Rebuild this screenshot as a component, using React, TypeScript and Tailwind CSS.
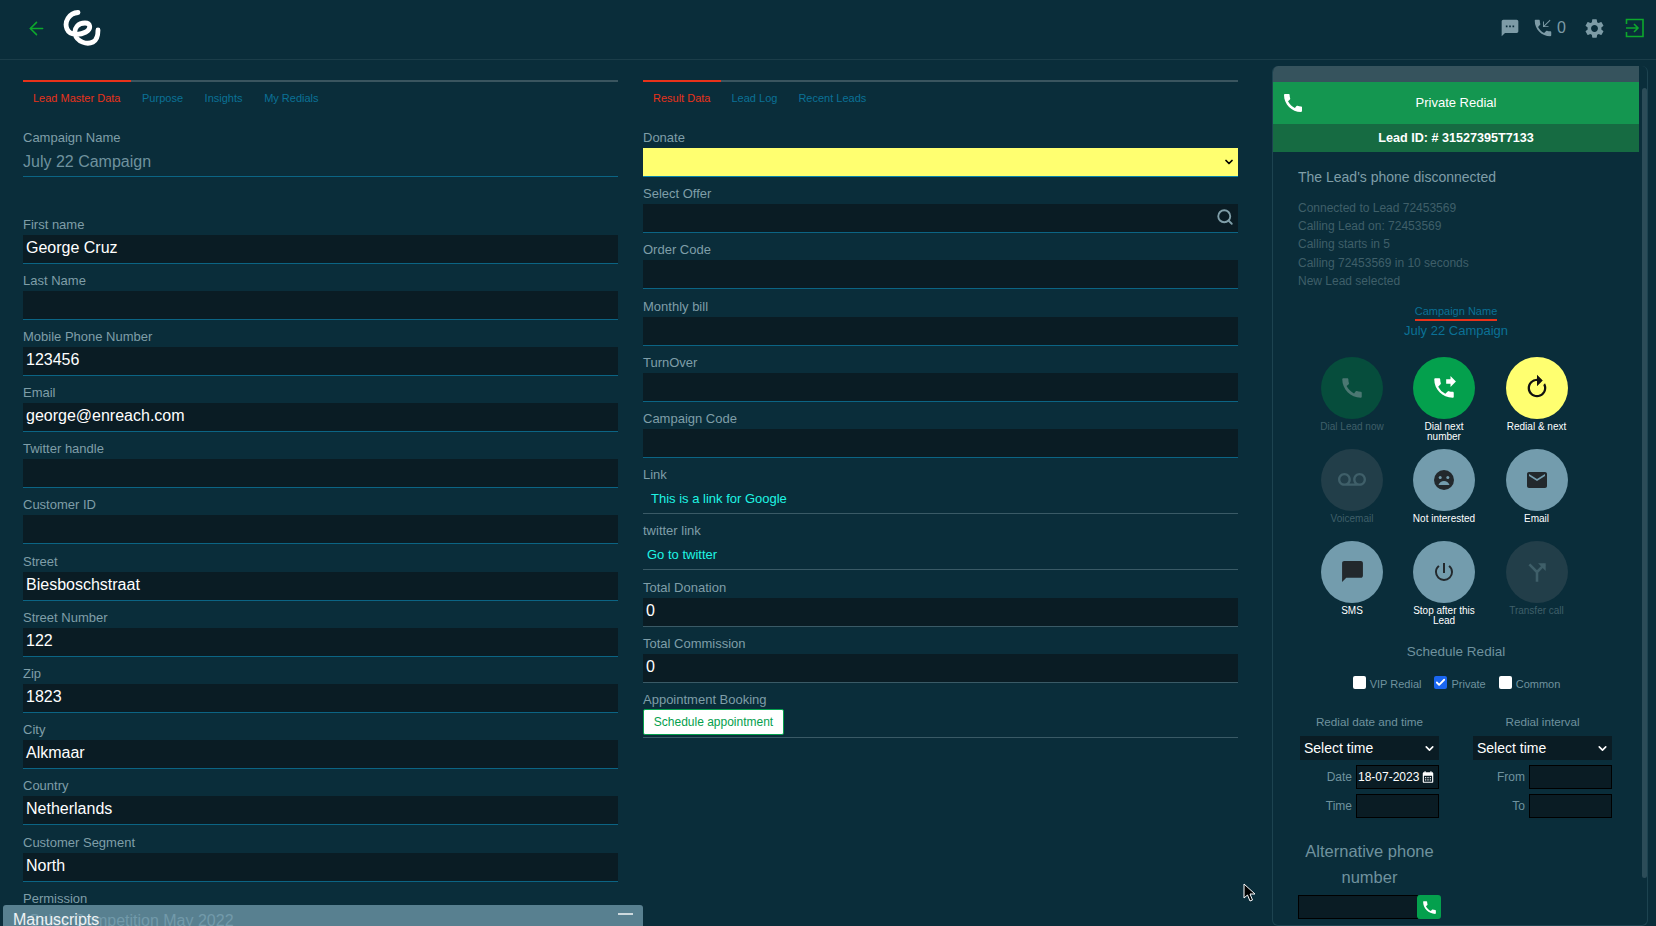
import React from 'react';
import { ArrowLeft, Check, ChevronDown, Search } from 'lucide-react';
import {
  MdCall,
  MdCalendarMonth,
  MdChatBubble,
  MdEmail,
  MdPhoneCallback,
  MdPhoneForwarded,
  MdPowerSettingsNew,
  MdRefresh,
  MdSettings,
  MdSms,
  MdVoicemail,
} from 'react-icons/md';

const leftFields = [
  { label: 'First name', value: 'George Cruz' },
  { label: 'Last Name', value: '' },
  { label: 'Mobile Phone Number', value: '123456' },
  { label: 'Email', value: 'george@enreach.com' },
  { label: 'Twitter handle', value: '' },
  { label: 'Customer ID', value: '' },
  { label: 'Street', value: 'Biesboschstraat' },
  { label: 'Street Number', value: '122' },
  { label: 'Zip', value: '1823' },
  { label: 'City', value: 'Alkmaar' },
  { label: 'Country', value: 'Netherlands' },
  { label: 'Customer Segment', value: 'North' },
];

const Field = ({ label, value = '', children, line = 'border-[#0b6484]' }: { label: string; value?: string; children?: React.ReactNode; line?: string }) => (
  <div className="mb-[7.2px]">
    <div className="h-5 text-[13px] leading-5 text-[#7f9ea8]">{label}</div>
    <div className={`relative flex h-[29px] items-center border-b bg-[#0a1c24] px-[3px] pb-[2px] text-base text-white ${line}`}>
      {value}
      {children}
    </div>
  </div>
);

const Tabs = ({ items, activeWidth, gap }: { items: string[]; activeWidth: string; gap: string }) => (
  <div className="relative h-[2px] bg-[#3a555f]">
    <div className={`h-[2px] bg-[#e8321a] ${activeWidth}`} />
    <div className={`flex pl-[10px] pt-[9px] text-[11px] leading-[14px] ${gap}`}>
      {items.map((item, idx) => (
        <span key={item} className={idx === 0 ? 'text-[#e8321a]' : 'text-[#0b7196]'}>
          {item}
        </span>
      ))}
    </div>
  </div>
);

const Logo = () => (
  <svg width="38" height="38" viewBox="0 0 38 38" fill="none" stroke="white" strokeWidth="4.8" strokeLinecap="round">
    <path d="M15 2.5C6 3 1 12 4 19c3 7 13 6 19 3 6-4 4-9-1-9-7 0-11 5-10 11 2 8 12 11 18 8 4-2 5-7 5-12" />
  </svg>
);

const TransferIcon = () => (
  <svg width="26" height="26" viewBox="0 0 24 24" fill="none" stroke="currentColor" strokeWidth="2.4">
    <path d="M5 5l7 7v9M12 12l7-7" />
    <path d="M13 4h7v7z" fill="currentColor" stroke="none" />
  </svg>
);

const ExitIcon = () => (
  <svg width="20" height="20" viewBox="0 0 20 20" fill="none" stroke="#0da82c" strokeWidth="1.6">
    <path d="M1.5 6V1.5h16.5v17H1.5V14" />
    <path d="M1 10h12M9 6l4 4-4 4" />
  </svg>
);

const SadFace = () => (
  <svg width="24" height="24" viewBox="0 0 24 24">
    <circle cx="12" cy="12" r="10" fill="currentColor" />
    <circle cx="8.2" cy="9.5" r="1.5" fill="#739cad" />
    <circle cx="15.8" cy="9.5" r="1.5" fill="#739cad" />
    <path d="M6.5 17c1-2.6 3-4 5.500-4s4.500 1.400 5.500 4z" fill="#739cad" />
  </svg>
);

const actions = [
  { label: 'Dial Lead now', circle: 'bg-[#064d3c] text-[#4b7772]', text: 'text-[#3f5f69]', icon: <MdCall size={26} /> },
  { label: 'Dial next number', circle: 'bg-[#04a04d] text-white', text: 'text-white', icon: <MdPhoneForwarded size={26} /> },
  { label: 'Redial & next', circle: 'bg-[#ffff70] text-[#111]', text: 'text-white', icon: <MdRefresh size={28} className="rotate-[-45deg]" /> },
  { label: 'Voicemail', circle: 'bg-[#223e49] text-[#3f5f69]', text: 'text-[#3f5f69]', icon: <MdVoicemail size={28} /> },
  { label: 'Not interested', circle: 'bg-[#739cad] text-[#22282c]', text: 'text-white', icon: <SadFace /> },
  { label: 'Email', circle: 'bg-[#739cad] text-[#22282c]', text: 'text-white', icon: <MdEmail size={24} /> },
  { label: 'SMS', circle: 'bg-[#739cad] text-[#22282c]', text: 'text-white', icon: <MdChatBubble size={25} /> },
  { label: 'Stop after this Lead', circle: 'bg-[#739cad] text-[#22282c]', text: 'text-white', icon: <MdPowerSettingsNew size={24} /> },
  { label: 'Transfer call', circle: 'bg-[#223e49] text-[#3f5f69]', text: 'text-[#3f5f69]', icon: <TransferIcon /> },
];

const Tick = ({ label, checked = false }: { label: string; checked?: boolean }) => (
  <span className="flex items-start gap-[4px]">
    <span className={`mt-[-1px] flex h-[13px] w-[13px] items-center justify-center rounded-[2px] ${checked ? 'bg-[#1a66f0]' : 'bg-white'}`}>
      {checked && <Check size={11} strokeWidth={4} className="text-white" />}
    </span>
    <span className="mt-[1px] leading-[13px]">{label}</span>
  </span>
);

const TimeSelect = () => (
  <div className="flex h-6 items-center justify-between bg-[#0a1c24] pl-[4px] pr-[3px] text-sm text-white">
    Select time
    <ChevronDown size={13} strokeWidth={3} />
  </div>
);

const SmallRow = ({ label, children }: { label: string; children?: React.ReactNode }) => (
  <div className="flex h-6 items-center justify-end gap-[4px] text-xs text-[#6f929e]">
    {label}
    <div className="flex h-6 w-[83px] items-center justify-between border border-black bg-[#0a1c24] pl-[1px] pr-[3px] text-xs text-white">
      {children}
    </div>
  </div>
);

const App = () => {
  return (
    <div className="relative h-screen w-full overflow-hidden bg-[#0a2d3a] font-['Liberation_Sans',Arial,sans-serif]">
      {/* top bar */}
      <header className="flex h-[60px] items-center border-b border-[#1b3d49] pb-[3px] pl-[26px] pr-[11px]">
        <ArrowLeft size={21} className="text-[#0da82c]" strokeWidth={1.8} />
        <div className="ml-[16px] mt-[2px]">
          <Logo />
        </div>
        <div className="ml-auto flex items-center text-[#7d9ba6]">
          <MdSms size={20} />
          <MdPhoneCallback size={22} className="ml-[12px]" />
          <span className="ml-[3px] text-base">0</span>
          <MdSettings size={23} className="ml-[17px]" />
          <div className="ml-[19px]">
            <ExitIcon />
          </div>
        </div>
      </header>

      <div className="flex h-[866px]">
        {/* lead master data */}
        <section className="ml-[23px] w-[595px] pt-5">
          <Tabs items={['Lead Master Data', 'Purpose', 'Insights', 'My Redials']} activeWidth="w-[108px]" gap="gap-[21.6px]" />
          <div className="mt-[46px] h-5 text-[13px] leading-5 text-[#7f9ea8]">Campaign Name</div>
          <div className="flex h-[29px] items-center border-b border-[#0b6484] pb-[1px] text-base text-[#6f929e]">July 22 Campaign</div>
          <div className="mt-[37.5px]">
            {leftFields.map((field) => (
              <Field key={field.label} label={field.label} value={field.value} />
            ))}
            <div className="h-5 text-[13px] leading-5 text-[#7f9ea8]">Permission</div>
            <div className="px-[6px] text-base text-[#6f929e]">Sales Competition May 2022</div>
          </div>
        </section>

        {/* result data */}
        <section className="ml-[25px] w-[595px] pt-5">
          <Tabs items={['Result Data', 'Lead Log', 'Recent Leads']} activeWidth="w-[78px]" gap="gap-[21px]" />
          <div className="mt-[46px]">
            <div className="mb-[7.2px]">
              <div className="h-5 text-[13px] leading-5 text-[#7f9ea8]">Donate</div>
              <div className="flex h-[29px] items-center justify-end border-b border-[#0b84a8] bg-[#ffff70] pr-[3px] text-black">
                <ChevronDown size={12} strokeWidth={3.5} />
              </div>
            </div>
            <Field label="Select Offer">
              <Search size={18} strokeWidth={2.5} className="absolute right-[4px] text-[#7f9ea8]" />
            </Field>
            <Field label="Order Code" />
            <Field label="Monthly bill" />
            <Field label="TurnOver" />
            <Field label="Campaign Code" />
            <div className="mb-[7.2px]">
              <div className="h-5 text-[13px] leading-5 text-[#7f9ea8]">Link</div>
              <div className="flex h-[29px] items-center border-b border-[#3a5a66] pl-[8px] text-[13px] text-[#1ff5e4]">This is a link for Google</div>
            </div>
            <div className="mb-[7.2px]">
              <div className="h-5 text-[13px] leading-5 text-[#7f9ea8]">twitter link</div>
              <div className="flex h-[29px] items-center border-b border-[#3a5a66] pb-[1px] pl-[4px] text-[13px] text-[#1ff5e4]">Go to twitter</div>
            </div>
            <Field label="Total Donation" value="0" line="border-[#3a5a66]" />
            <Field label="Total Commission" value="0" line="border-[#3a5a66]" />
            <div className="h-[19px] text-[13px] leading-5 text-[#7f9ea8]">Appointment Booking</div>
            <div className="border-b border-[#3a5a66] pb-[2px]">
              <button className="block h-[26px] w-[141px] rounded-[2px] border border-[#04a04d] bg-white text-xs text-[#04a04d]">Schedule appointment</button>
            </div>
          </div>
        </section>

        {/* redial panel */}
        <aside className="ml-[34px] mt-[6px] flex h-[860px] w-[376px] overflow-hidden rounded-t-[6px] border-l border-r border-b border-[#1d4350] rounded-b-[6px]">
          <div className="w-[366px] shrink-0">
            <div className="h-[16px] bg-[#36535d]" />
            <div className="relative flex h-[42px] items-center justify-center bg-[#149650] text-[13px] text-white">
              <MdCall size={24} className="absolute left-[8px]" />
              Private Redial
            </div>
            <div className="flex h-[28px] items-center justify-center bg-[#166b42] text-[12.6px] font-bold text-white">Lead ID: # 31527395T7133</div>

            <div className="px-[25px] pt-[10px]">
              <div className="text-sm leading-[30px] text-[#7f9ea8]">The Lead's phone disconnected</div>
              <div className="mt-[7px] text-xs leading-[18.2px] text-[#3f5f69]">
                <div>Connected to Lead 72453569</div>
                <div>Calling Lead on: 72453569</div>
                <div>Calling starts in 5</div>
                <div>Calling 72453569 in 10 seconds</div>
                <div>New Lead selected</div>
              </div>
            </div>

            <div className="mt-[14px] flex flex-col items-center">
              <span className="border-b-2 border-[#e8321a] text-[11px] leading-[15px] text-[#0b7196]">Campaign Name</span>
              <span className="mt-[1px] text-[13px] leading-[18px] text-[#0b7196]">July 22 Campaign</span>
            </div>

            <div className="ml-[33px] mt-[16.5px] grid w-[277px] grid-cols-[92px_92px_93px]">
              {actions.map((action) => (
                <div key={action.label} className="flex h-[92px] flex-col items-center">
                  <div className={`flex h-[62px] w-[62px] shrink-0 items-center justify-center rounded-full ${action.circle}`}>{action.icon}</div>
                  <div className={`mt-[3.5px] w-[70px] text-center text-[10px] leading-[10px] ${action.text}`}>{action.label}</div>
                </div>
              ))}
            </div>

            <div className="mt-[9.5px] text-center text-[13.5px] leading-5 text-[#6f929e]">Schedule Redial</div>
            <div className="mt-[15px] flex justify-center gap-[13px] pl-[1px] text-[11px] text-[#6f929e]">
              <Tick label="VIP Redial" />
              <Tick label="Private" checked />
              <Tick label="Common" />
            </div>

            <div className="mt-[23px] grid grid-cols-[139px_139px] gap-x-[34px] pl-[27px]">
              <div>
                <div className="mb-[6px] text-center text-[11.7px] leading-4 text-[#6f929e]">Redial date and time</div>
                <TimeSelect />
                <div className="mt-[5px] flex flex-col gap-[5px]">
                  <SmallRow label="Date">
                    18-07-2023
                    <MdCalendarMonth size={14} />
                  </SmallRow>
                  <SmallRow label="Time" />
                </div>
              </div>
              <div>
                <div className="mb-[6px] text-center text-[11.7px] leading-4 text-[#6f929e]">Redial interval</div>
                <TimeSelect />
                <div className="mt-[5px] flex flex-col gap-[5px]">
                  <SmallRow label="From" />
                  <SmallRow label="To" />
                </div>
              </div>
            </div>

            <div className="ml-[25px] mt-[20px] w-[143px]">
              <div className="text-center text-[16.5px] leading-[26px] text-[#6f929e]">Alternative phone number</div>
              <div className="mt-[5px] flex">
                <div className="h-6 w-[120px] border border-black bg-[#0a1c24]" />
                <div className="-ml-[1px] flex h-6 w-6 items-center justify-center rounded-[3px] bg-[#04a04d] text-white">
                  <MdCall size={17} />
                </div>
              </div>
            </div>
          </div>
          <div className="ml-[3px] mt-[22px] h-[790px] w-[6px] rounded-full bg-[#2c4c58]" />
        </aside>
      </div>

      {/* minimized manuscripts window */}
      <div className="absolute bottom-0 left-[3px] flex h-[21px] w-[640px] items-center justify-between rounded-t-[3px] bg-[#739cad]/75 px-[10px] text-base text-white/90">
        <span className="pt-[8px]">Manuscripts</span>
        <span className="mt-[-4px] h-[2px] w-[15px] bg-white/70" />
      </div>

      {/* mouse pointer */}
      <svg className="absolute left-[1243px] top-[883px]" width="14" height="20" viewBox="0 0 14 20">
        <path d="M1 1v14l3.500-3 2.500 6 2.500-1-2.500-6h5z" fill="#000" stroke="#fff" strokeWidth="1" />
      </svg>
    </div>
  );
};

export default App;
